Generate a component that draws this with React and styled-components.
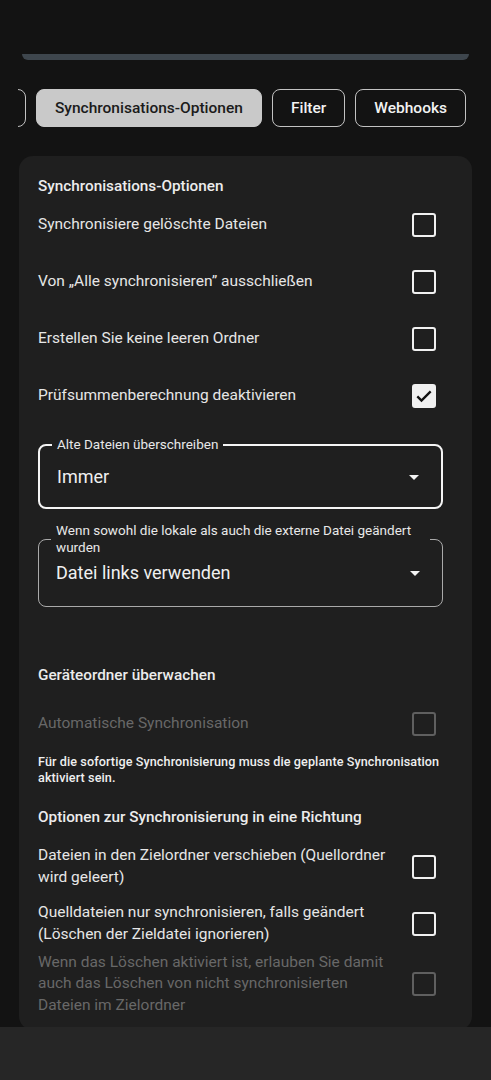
import React from 'react';
import styled, { createGlobalStyle } from 'styled-components';

const Global = createGlobalStyle`
  html, body {
    margin: 0;
    padding: 0;
    background: #131313;
    font-family: Roboto, "Noto Sans", "Liberation Sans", sans-serif;
    color: #e4e4e4;
  }
  * { box-sizing: border-box; }
`;

const Page = styled.div`
  min-height: 1080px;
  padding-bottom: 60px;
`;

const TopStrip = styled.div`
  margin: 54px 22px 0;
  height: 6px;
  background: #3e464d;
  border-radius: 0 0 12px 12px;
`;

const TabRow = styled.div`
  display: flex;
  justify-content: flex-end;
  gap: 10px;
  margin: 29px 0 0 18px;
  padding-right: 25px;
  overflow: hidden;
`;

const Tab = styled.div`
  flex: none;
  height: 38px;
  padding: 0 18px;
  display: flex;
  align-items: center;
  border-radius: 8px;
  font-size: 15.5px;
  font-weight: 500;
  border: 1px solid ${p => (p.$active ? '#c9c9c9' : '#c2c2c2')};
  background: ${p => (p.$active ? '#c9c9c9' : 'transparent')};
  color: ${p => (p.$active ? '#1b1b1b' : '#f2f2f2')};
  white-space: nowrap;
`;

const Card = styled.div`
  margin: 29px 19px 0;
  background: #1f1f1f;
  border-radius: 14px;
  padding: 20px 19px 14px;
`;

const Heading = styled.div`
  font-size: 15.3px;
  font-weight: 500;
  line-height: 20px;
  color: #ececec;
  margin-top: ${p => p.$top || 0}px;
  margin-bottom: ${p => p.$bottom || 0}px;
`;

const Row = styled.div`
  display: flex;
  align-items: center;
  gap: 20px;
  min-height: 57px;
`;

const RowLabel = styled.div`
  flex: 1;
  font-size: 15.5px;
  line-height: 21.3px;
  color: ${p => (p.$disabled ? '#686868' : '#e6e6e6')};
`;

const Box = styled.div`
  flex: none;
  width: 24px;
  height: 24px;
  margin-right: 17px;
  border-radius: 3px;
  border: 2px solid ${p => (p.$disabled ? '#5f5f5f' : '#f0f0f0')};
  background: ${p => (p.$checked ? '#f0f0f0' : 'transparent')};
  display: flex;
  align-items: center;
  justify-content: center;
`;

const Field = styled.fieldset`
  margin: ${p => p.$top}px 10px 0 0;
  padding: 0 12px;
  border: ${p => (p.$focused ? '2px solid #f4f4f4' : '1px solid #a9a9a9')};
  border-radius: 8px;
  min-width: 0;
`;

const Legend = styled.legend`
  padding: 0 5px;
  font-size: 13.5px;
  line-height: 17px;
  color: #e8e8e8;
`;

const ValueRow = styled.div`
  display: flex;
  align-items: center;
  justify-content: space-between;
  padding: ${p => p.$pt}px 10px ${p => p.$pb}px 5px;
  font-size: 18px;
  line-height: 34px;
  color: #f0f0f0;
`;

const Arrow = styled.span`
  width: 0;
  height: 0;
  border-left: 5.5px solid transparent;
  border-right: 5.5px solid transparent;
  border-top: 5.5px solid #f4f4f4;
`;

const Helper = styled.div`
  font-size: 12.6px;
  font-weight: 500;
  letter-spacing: 0.1px;
  line-height: 16px;
  color: #efefef;
  margin-top: 2px;
`;

const HelperLine = styled.span`
  display: block;
  white-space: nowrap;
`;

const BottomBar = styled.div`
  position: fixed;
  left: 0;
  right: 0;
  bottom: 0;
  height: 53px;
  background: #262626;
`;

function Check({ checked, disabled }) {
  return (
    <Box $checked={checked} $disabled={disabled}>
      {checked && (
        <svg width="20" height="20" viewBox="0 0 24 24">
          <path d="M4 12.5l5 5L20 6.5" fill="none" stroke="#111" strokeWidth="2.8" />
        </svg>
      )}
    </Box>
  );
}

function Option({ label, checked, disabled }) {
  return (
    <Row>
      <RowLabel $disabled={disabled}>{label}</RowLabel>
      <Check checked={checked} disabled={disabled} />
    </Row>
  );
}

function Select({ label, value, focused, top, pt, pb }) {
  return (
    <Field $focused={focused} $top={top}>
      <Legend>{label}</Legend>
      <ValueRow $pt={pt} $pb={pb}>
        <span>{value}</span>
        <Arrow />
      </ValueRow>
    </Field>
  );
}

export default function App() {
  return (
    <Page>
      <Global />
      <TopStrip />
      <TabRow>
        <Tab>Ordnerpaar</Tab>
        <Tab $active>Synchronisations-Optionen</Tab>
        <Tab>Filter</Tab>
        <Tab>Webhooks</Tab>
      </TabRow>
      <Card>
        <Heading>Synchronisations-Optionen</Heading>
        <Option label="Synchronisiere gelöschte Dateien" />
        <Option label="Von „Alle synchronisieren” ausschließen" />
        <Option label="Erstellen Sie keine leeren Ordner" />
        <Option label="Prüfsummenberechnung deaktivieren" checked />
        <Select
          focused
          top={12}
          pt={7}
          pb={13}
          label="Alte Dateien überschreiben"
          value="Immer"
        />
        <Select
          top={13}
          pt={0}
          pb={16}
          label="Wenn sowohl die lokale als auch die externe Datei geändert wurden"
          value="Datei links verwenden"
        />

        <Heading $top={58} $bottom={10}>Geräteordner überwachen</Heading>
        <Option label="Automatische Synchronisation" disabled />
        <Helper>
          <HelperLine>Für die sofortige Synchronisierung muss die geplante Synchronisation</HelperLine>
          <HelperLine>aktiviert sein.</HelperLine>
        </Helper>
        <Heading $top={21} $bottom={11}>Optionen zur Synchronisierung in eine Richtung</Heading>
        <Option label="Dateien in den Zielordner verschieben (Quellordner wird geleert)" />
        <Option label="Quelldateien nur synchronisieren, falls geändert (Löschen der Zieldatei ignorieren)" />
        <Option
          disabled
          label="Wenn das Löschen aktiviert ist, erlauben Sie damit auch das Löschen von nicht synchronisierten Dateien im Zielordner"
        />
      </Card>
      <BottomBar />
    </Page>
  );
}
